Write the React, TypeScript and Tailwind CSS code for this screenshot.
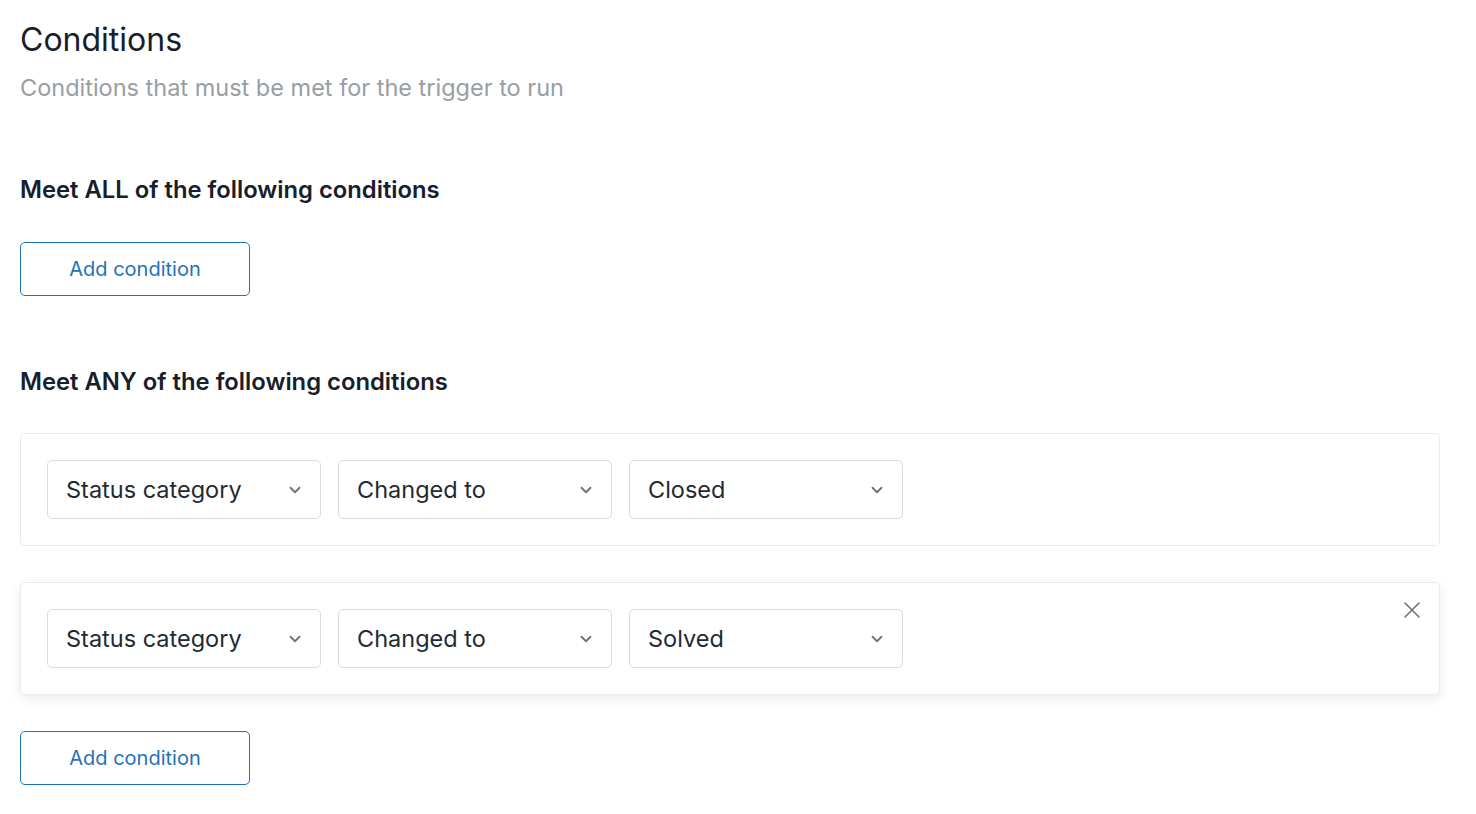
import { ChevronDown, X } from "lucide-react";

const font = { fontFamily: "Inter, 'Noto Sans', sans-serif" };

function Select({ label }: { label: string }) {
  return (
    <div className="flex h-[59px] w-[274px] items-center justify-between rounded-[5px] border border-[#d8dcde] bg-white pl-[18px] pr-[16px]">
      <span className="text-[23.5px] text-[#1f2a33]">{label}</span>
      <ChevronDown className="h-[18px] w-[18px] text-[#68737d]" strokeWidth={2.4} />
    </div>
  );
}

function AddButton() {
  return (
    <button className="flex h-[54px] w-[230px] items-center justify-center rounded-[5px] border border-[#1f73b7] bg-white text-[20px] text-[#1f73b7]">
      Add condition
    </button>
  );
}

function ConditionRow({ value, removable }: { value: string; removable?: boolean }) {
  return (
    <div
      className={
        "relative flex h-[113px] items-center gap-[17px] rounded-[5px] border border-[#e9ebed] bg-white px-[26px] " +
        (removable ? "shadow-[0_4px_12px_rgba(0,0,0,0.08)]" : "")
      }
    >
      <Select label="Status category" />
      <Select label="Changed to" />
      <Select label={value} />
      {removable && (
        <X className="absolute right-[13px] top-[13px] h-[28px] w-[28px] text-[#68737d]" strokeWidth={1.3} />
      )}
    </div>
  );
}

export default function App() {
  return (
    <div className="min-h-screen w-full bg-white pl-[20px] pr-[36px] pt-[18px]" style={font}>
      <h1 className="text-[32px] leading-[44px] text-[#17202a]">Conditions</h1>
      <p className="mt-[11px] text-[23.5px] leading-[30px] text-[#979ea4]">
        Conditions that must be met for the trigger to run
      </p>

      <h2 className="mt-[72px] text-[23.8px] font-semibold leading-[30px] text-[#17202a]">
        Meet ALL of the following conditions
      </h2>
      <div className="mt-[37px]">
        <AddButton />
      </div>

      <h2 className="mt-[71px] text-[23.8px] font-semibold leading-[30px] text-[#17202a]">
        Meet ANY of the following conditions
      </h2>
      <div className="mt-[36px] flex flex-col gap-[36px]">
        <ConditionRow value="Closed" />
        <ConditionRow value="Solved" removable />
      </div>
      <div className="mt-[36px]">
        <AddButton />
      </div>
    </div>
  );
}
